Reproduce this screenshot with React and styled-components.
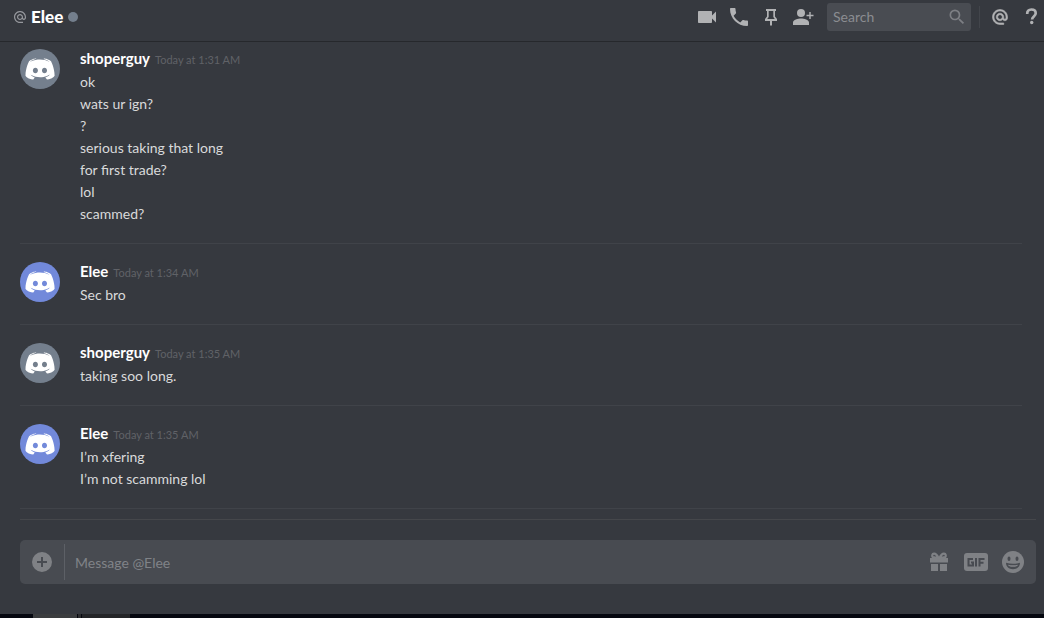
import React from "react";
import styled, { createGlobalStyle } from "styled-components";

const GlobalStyle = createGlobalStyle`
  *, *::before, *::after { box-sizing: border-box; }
  body {
    margin: 0;
    background: #36393f;
    font-family: Lato, "Noto Sans", sans-serif;
    font-size: 14px;
    color: #d9dadb;
  }
  h1, h2, p, ol, ul { margin: 0; padding: 0; }
  ol { list-style: none; }
  button { border: 0; padding: 0; background: none; color: inherit; cursor: pointer; }
  input { border: 0; padding: 0; background: none; outline: 0; font: inherit; }
`;

const Page = styled.div`
  display: flex;
  flex-direction: column;
  min-height: 100vh;
`;

const Header = styled.header`
  display: flex;
  align-items: center;
  justify-content: space-between;
  height: 42px;
  padding: 0 0 8px 14px;
  border-bottom: 1px solid #26282c;
`;

const Recipient = styled.div`
  display: flex;
  align-items: center;
  gap: 5px;
`;

const RecipientName = styled.h1`
  font-size: 17px;
  line-height: 20px;
  font-weight: 900;
  color: #fff;
`;

const Status = styled.span`
  width: 10px;
  height: 10px;
  border-radius: 50%;
  background: #747f8d;
`;

const Toolbar = styled.div`
  display: flex;
  align-items: center;
  gap: 8px;
  color: #b1b2b4;
`;

const IconButton = styled.button`
  display: grid;
  place-items: center;
  width: 24px;
  height: 24px;
`;

const SearchBox = styled.label`
  display: flex;
  align-items: center;
  width: 144px;
  height: 28px;
  margin-left: 4px;
  padding: 0 4px 0 6px;
  border-radius: 3px;
  background: #494c52;
  color: #7d7f84;
`;

const SearchInput = styled.input`
  flex: 1;
  min-width: 0;
  color: #dcddde;
  &::placeholder { color: #8b8d91; opacity: 1; }
`;

const Rule = styled.span`
  width: 1px;
  height: 22px;
  background: #42454b;
`;

const Messages = styled.ol`
  flex: 1;
  padding: 0 22px 0 20px;
`;

const Group = styled.li`
  display: flex;
  gap: 20px;
  padding: 18px 0;
  border-bottom: 1px solid #404349;
  &:first-child { padding-top: 7px; }
`;

const Avatar = styled.span`
  display: grid;
  place-items: center;
  flex: none;
  width: 40px;
  height: 40px;
  border-radius: 50%;
  background: ${(p) => (p.$online ? "#7289da" : "#747f8d")};
`;

const Byline = styled.div`
  display: flex;
  align-items: baseline;
  gap: 5px;
  height: 22px;
  line-height: 18px;
`;

const Author = styled.h2`
  font-size: 15px;
  font-weight: 700;
  color: #fff;
`;

const Time = styled.time`
  font-size: 11px;
  color: #606267;
`;

const Line = styled.p`
  line-height: 22px;
`;

const Composer = styled.form`
  margin: 0 8px 0 20px;
  padding: 20px 0 30px;
  border-top: 1px solid #45474b;
`;

const ComposerBox = styled.div`
  display: flex;
  align-items: center;
  height: 44px;
  padding: 0 11px 0 10px;
  border-radius: 5px;
  background: #484b51;
  color: #7f8185;
`;

const ComposerRule = styled.span`
  width: 1px;
  height: 36px;
  margin: 0 10px;
  background: #5d6066;
`;

const MessageInput = styled.input`
  flex: 1;
  min-width: 0;
  color: #dcddde;
  &::placeholder { color: #808388; opacity: 1; }
`;

const Extras = styled.div`
  display: flex;
  gap: 13px;
`;

const Taskbar = styled.footer`
  display: flex;
  gap: 1px;
  height: 4px;
  padding-left: 33px;
  background: #05070f;
`;

const TaskbarItem = styled.span`
  width: ${(p) => p.$width}px;
  background: ${(p) => p.$color};
`;

function Icon({ size = 24, children }) {
  return (
    <svg width={size} height={size} viewBox="0 0 24 24" fill="currentColor" aria-hidden="true">
      {children}
    </svg>
  );
}

const AT_PATH =
  "M12 1.95c-5.52 0-10 4.48-10 10s4.48 10 10 10h5v-2h-5c-4.34 0-8-3.66-8-8s3.66-8 8-8 8 3.66 8 8v1.43c0 .79-.71 1.57-1.5 1.57s-1.5-.78-1.5-1.57v-1.43c0-2.76-2.24-5-5-5s-5 2.24-5 5 2.24 5 5 5c1.38 0 2.64-.56 3.54-1.47.65.89 1.77 1.47 2.96 1.47 1.97 0 3.5-1.6 3.5-3.57v-1.43c0-5.52-4.48-10-10-10zm0 13c-1.66 0-3-1.34-3-3s1.34-3 3-3 3 1.34 3 3-1.34 3-3 3z";

function VideoIcon() {
  return <Icon><path d="M17 10.5V7c0-.55-.45-1-1-1H4c-.55 0-1 .45-1 1v10c0 .55.45 1 1 1h12c.55 0 1-.45 1-1v-3.5l4 4v-11l-4 4z" /></Icon>;
}

function PhoneIcon() {
  return <Icon><path d="M6.62 10.79c1.44 2.83 3.76 5.14 6.59 6.59l2.2-2.2c.27-.27.67-.36 1.02-.24 1.12.37 2.33.57 3.57.57.55 0 1 .45 1 1V20c0 .55-.45 1-1 1-9.39 0-17-7.61-17-17 0-.55.45-1 1-1h3.5c.55 0 1 .45 1 1 0 1.25.2 2.45.57 3.57.11.35.03.74-.25 1.02l-2.2 2.2z" /></Icon>;
}

function PinIcon() {
  return <Icon><path d="M7 4h10v2h-1v5.5l2 2.5v2h-5v4.6h-2V16H6v-2l2-2.500V6H7zM9.700 6v6l-1.500 2h7.600l-1.500-2V6z" /></Icon>;
}

function AddFriendIcon() {
  return (
    <Icon>
      <circle cx="10" cy="8" r="4" />
      <path d="M2 20v-2.500c0-2.700 5-4 8-4s8 1.300 8 4V20zM18.300 7h1.400v2.800h2.800v1.400h-2.800V14h-1.400v-2.800h-2.800V9.800h2.800z" />
    </Icon>
  );
}

function SearchIcon() {
  return <Icon size={20}><path d="M15.500 14h-.79l-.28-.27A6.470 6.470 0 0 0 16 9.500 6.500 6.500 0 1 0 9.500 16c1.610 0 3.090-.59 4.230-1.570l.27.28v.79l5 4.990L20.490 19zm-6 0C7.010 14 5 11.990 5 9.500S7.010 5 9.500 5 14 7.010 14 9.500 11.990 14 9.500 14z" /></Icon>;
}

function MentionIcon() {
  return (
    <svg width="18" height="18" viewBox="0 0 24 24" fill="currentColor" stroke="currentColor" strokeWidth="0.8" aria-hidden="true">
      <path d={AT_PATH} />
    </svg>
  );
}

function HelpIcon() {
  return (
    <Icon>
      <path d="M7.600 9.400C7.500 6.500 9 4.900 11.800 4.900s4.300 1.400 4.300 3.700c0 3.300-3.600 3.200-3.600 6.200" fill="none" stroke="currentColor" strokeWidth="2.700" transform="translate(-.4 -.4)" />
      <circle cx="11.700" cy="17.500" r="1.700" />
    </Icon>
  );
}

function PlusIcon() {
  return <Icon><path fillRule="evenodd" d="M12 2a10 10 0 1 0 0 20 10 10 0 0 0 0-20zM11 7h2v4h4v2h-4v4h-2v-4H7v-2h4z" /></Icon>;
}

function GiftIcon() {
  return (
    <Icon>
      <path d="M3 8h18v4.500H3zM4 14h7v7H4zM13 14h7v7h-7z" />
      <path d="M11.500 8C10 4.800 8.600 3.600 7 3.700 5 3.800 4.800 5.800 5.700 7.200zM12.500 8c1.500-3.200 2.900-4.400 4.500-4.300 2 .1 2.200 2.100 1.300 3.500z" fill="none" stroke="currentColor" strokeWidth="2.200" />
    </Icon>
  );
}

function GifIcon() {
  return (
    <Icon>
      <rect x="0" y="3" width="24" height="18" rx="3" />
      <path d="M9 9H4.500v6.500H9v-3H7M12 8v8.500M15.500 16.500V9H20.500M15.500 12.700H19.500" fill="none" stroke="#484b51" strokeWidth="2" />
    </Icon>
  );
}

function SmileIcon() {
  return (
    <Icon>
      <circle cx="12" cy="12" r="11" />
      <ellipse cx="8" cy="8.800" rx="1.500" ry="2.200" fill="#484b51" />
      <ellipse cx="16" cy="8.800" rx="1.500" ry="2.200" fill="#484b51" />
      <path d="M5 12.800c4.600 1.400 9.400 1.400 14 0 0 4-3 6.400-7 6.400s-7-2.400-7-6.400z" fill="#484b51" />
      <path d="M7 14.700c3.300.7 6.700.7 10 0-.4 1.500-2 2-5 2s-4.600-.5-5-2z" fill="#85878b" />
    </Icon>
  );
}

function DiscordLogo() {
  return (
    <svg width="30" height="22" viewBox="71 118 308 218" fill="#fff" aria-hidden="true">
      <path d="M297.216 243.2c0 15.616-11.52 28.416-26.112 28.416-14.336 0-26.112-12.8-26.112-28.416s11.52-28.416 26.112-28.416c14.592 0 26.112 12.8 26.112 28.416zm-119.552-28.416c-14.592 0-26.112 12.8-26.112 28.416s11.776 28.416 26.112 28.416c14.592 0 26.112-12.8 26.112-28.416.256-15.616-11.52-28.416-26.112-28.416zM375.04 295.424c0-82.432-36.864-149.248-36.864-149.248-36.864-27.648-71.936-26.88-71.936-26.88l-3.584 4.096c43.52 13.312 63.744 32.512 63.744 32.512-60.811-33.329-132.244-33.335-191.232-7.424-9.472 4.352-15.104 7.424-15.104 7.424s21.248-20.224 67.328-33.536l-2.56-3.072s-35.072-.768-71.936 26.88c0 0-36.864 66.816-36.864 149.248 0 0 21.504 37.12 78.08 38.912 0 0 9.472-11.52 17.152-21.248-32.512-9.728-44.8-30.208-44.8-30.208 3.766 2.636 9.976 6.053 10.496 6.4 43.21 24.198 104.588 32.126 159.744 8.96 8.96-3.328 18.944-8.192 29.44-15.104 0 0-12.8 20.992-46.336 30.464 7.68 9.728 16.896 20.736 16.896 20.736 56.576-1.792 78.336-38.912 78.336-38.912z" fillRule="evenodd" />
    </svg>
  );
}

const GROUPS = [
  {
    author: "shoperguy",
    time: "Today at 1:31 AM",
    lines: ["ok", "wats ur ign?", "?", "serious taking that long", "for first trade?", "lol", "scammed?"],
  },
  { author: "Elee", time: "Today at 1:34 AM", lines: ["Sec bro"] },
  { author: "shoperguy", time: "Today at 1:35 AM", lines: ["taking soo long."] },
  { author: "Elee", time: "Today at 1:35 AM", lines: ["I’m xfering", "I’m not scamming lol"] },
];

export default function App() {
  return (
    <Page>
      <GlobalStyle />
      <Header>
        <Recipient>
          <svg width="12" height="12" viewBox="2 2 20 20" fill="#96989d" aria-hidden="true"><path d={AT_PATH} /></svg>
          <RecipientName>Elee</RecipientName>
          <Status />
        </Recipient>
        <Toolbar>
          <IconButton type="button" aria-label="Start video call"><VideoIcon /></IconButton>
          <IconButton type="button" aria-label="Start voice call"><PhoneIcon /></IconButton>
          <IconButton type="button" aria-label="Pinned messages"><PinIcon /></IconButton>
          <IconButton type="button" aria-label="Add friends"><AddFriendIcon /></IconButton>
          <SearchBox>
            <SearchInput type="text" placeholder="Search" aria-label="Search" />
            <SearchIcon />
          </SearchBox>
          <Rule />
          <IconButton type="button" aria-label="Mentions"><MentionIcon /></IconButton>
          <IconButton type="button" aria-label="Help"><HelpIcon /></IconButton>
        </Toolbar>
      </Header>
      <Messages>
        {GROUPS.map((group, i) => (
          <Group key={i}>
            <Avatar $online={group.author === "Elee"}><DiscordLogo /></Avatar>
            <div>
              <Byline>
                <Author>{group.author}</Author>
                <Time>{group.time}</Time>
              </Byline>
              {group.lines.map((line) => <Line key={line}>{line}</Line>)}
            </div>
          </Group>
        ))}
      </Messages>
      <Composer>
        <ComposerBox>
          <IconButton type="button" aria-label="Attach a file"><PlusIcon /></IconButton>
          <ComposerRule />
          <MessageInput type="text" placeholder="Message @Elee" aria-label="Message @Elee" />
          <Extras>
            <IconButton type="button" aria-label="Send a gift"><GiftIcon /></IconButton>
            <IconButton type="button" aria-label="Pick a GIF"><GifIcon /></IconButton>
            <IconButton type="button" aria-label="Pick an emoji"><SmileIcon /></IconButton>
          </Extras>
        </ComposerBox>
      </Composer>
      <Taskbar>
        <TaskbarItem $width={44} $color="#3b3d3f" />
        <TaskbarItem $width={3} $color="#2b2c2e" />
        <TaskbarItem $width={48} $color="#242528" />
      </Taskbar>
    </Page>
  );
}
